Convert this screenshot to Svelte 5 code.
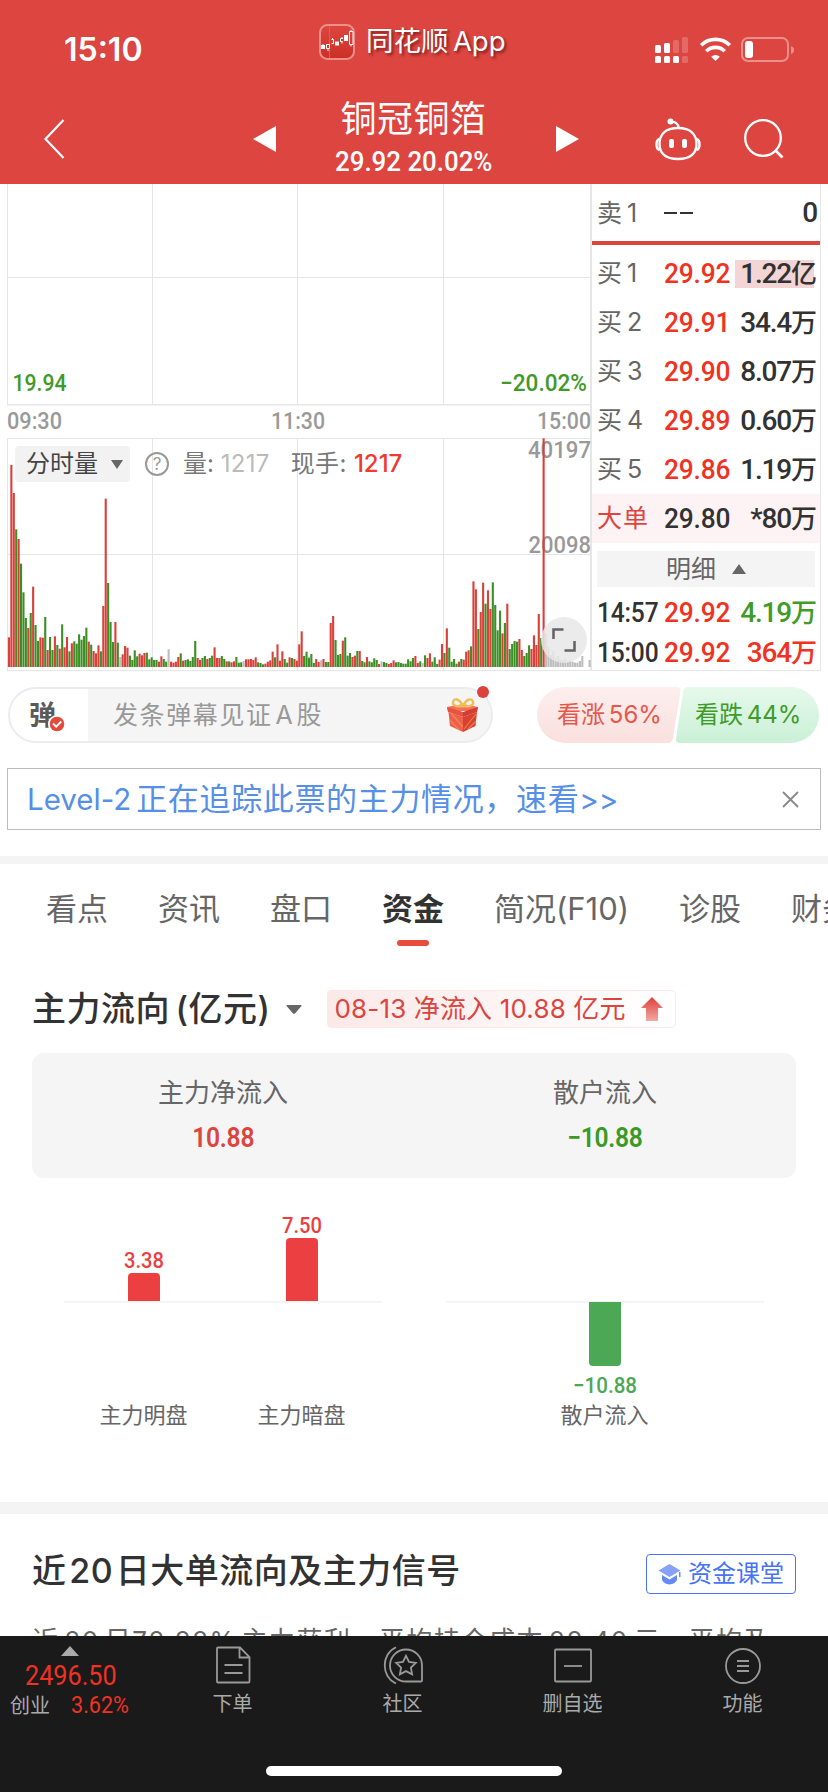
<script lang="ts">
	const PITCH = 2.4193;

	// one entry per minute: direction (r up, g down, n flat) + volume height
	const volumes = (
		'r89 r606 r522 g413 r384 g310 g224 g147 r117 g162 r241 g126 g78 r89 r88 g150 r51 g90 g51 r92 ' +
		'g66 r55 g128 r59 r90 g47 r71 g77 g70 g98 g82 g93 g118 r76 g67 r48 r41 r65 g47 r183 ' +
		'r505 g252 g135 g75 r135 g73 n30 r38 r63 r58 g34 g21 g50 g32 r40 r35 r42 g43 g23 g29 ' +
		'g21 g21 r16 r32 g24 g16 n53 r16 r13 r16 r30 g41 r19 g21 g23 g18 g30 g78 r27 r21 ' +
		'g27 g33 r24 g27 g34 r59 r27 r27 g33 g24 r17 g17 r14 r17 g30 g13 g14 n18 r23 r23 ' +
		'r24 r21 r29 g14 g12 g8 r10 r16 r20 r46 g29 r68 r19 r47 g24 g13 r29 g27 r24 r19 ' +
		'r68 r107 g33 g46 g28 g39 g12 r24 r15 n20 r24 g15 g15 r132 r153 g81 g36 g39 r79 g89 ' +
		'g34 g42 r30 r34 g48 r48 g18 g14 r30 g17 g14 g26 g21 r9 n17 g15 g12 r9 r12 r20 ' +
		'g14 g15 g12 g10 g10 g23 g17 g27 r33 r12 g17 n12 g35 r27 r41 g16 g29 g9 r22 r69 ' +
		'g42 r116 g58 g16 g24 g10 r16 g24 r22 r46 r50 g62 r257 r233 g114 r165 r253 g190 r230 r174 ' +
		'g254 g186 g110 g169 r101 g132 r190 g54 g69 g78 g76 r84 r51 g33 g42 g65 r54 r95 r66 r159 ' +
		'g87 r686 n101 n61 n36 n48 n26 n33 n21 n19 n24 n16 n21 n16 n13 n13 n18 n33 n0 n0 n21'
	)
		.split(' ')
		.map((v, i) => ({
			x: 7.9 + i * PITCH,
			dir: v[0],
			h: Number(v.slice(1)) / 3
		}));

	const bids = [
		{ label: '买', no: 1, price: '29.92', vol: '1.22', unit: '亿', hot: true },
		{ label: '买', no: 2, price: '29.91', vol: '34.4', unit: '万' },
		{ label: '买', no: 3, price: '29.90', vol: '8.07', unit: '万' },
		{ label: '买', no: 4, price: '29.89', vol: '0.60', unit: '万' },
		{ label: '买', no: 5, price: '29.86', vol: '1.19', unit: '万' }
	];

	const trades = [
		{ time: '14:57', price: '29.92', vol: '4.19', dir: 'green' },
		{ time: '15:00', price: '29.92', vol: '364', dir: 'red' }
	];

	const tabs = ['看点', '资讯', '盘口', '资金', '简况(F10)', '诊股', '财务'];
	let active = $state('资金');
</script>

<div class="app">
	<header>
		<div class="status">
			<span class="clock">15:10</span>
			<div class="brand">
				<svg width="36" height="36" viewBox="0 0 36 36">
					<defs>
						<linearGradient id="logo" x1="0" y1="0" x2="0" y2="1">
							<stop offset="0" stop-color="#dd4640" />
							<stop offset="1" stop-color="#cb3026" />
						</linearGradient>
					</defs>
					<rect x="1" y="1" width="34" height="34" rx="7.5" fill="url(#logo)" stroke="#ec8f8b" stroke-width="2" />
					<path d="M10.5 2v32" stroke="#e2655f" stroke-width=".8" />
					<g fill="#fff">
						<path d="M2 21h4v4h-4zM3.500 20h1v1h-1zM16 17.500h4v4h-4zM25 11h4v6h-4z" />
					</g>
					<g fill="none" stroke="#fff" stroke-width="1">
						<path d="M7.500 20.500h3v4h-3zM9 24.500v2.500M12.500 15.500h2v4h-2M13.500 14v1.500M21.500 14.500h2.500M21.500 14.500v3h2M23 13v2M23 17.500v2M30.500 7.500h3.500v13h-3.500zM32 6v1.500M32 20.500v2" />
					</g>
				</svg>
				<span>同花顺<s></s>App</span>
			</div>
			<svg class="signals" width="142" height="28" viewBox="0 0 142 28">
				<g fill="#fff">
					<rect x="0" y="9" width="6" height="8" rx="1.500" />
					<rect x="9" y="7" width="6" height="10" rx="1.500" />
					<rect x="18" y="4" width="6" height="13" rx="1.500" opacity=".2" />
					<rect x="27" y="1" width="6" height="16" rx="1.500" opacity=".2" />
					<rect x="0" y="20" width="6" height="7" rx="1.500" />
					<rect x="9" y="20" width="6" height="7" rx="1.500" />
					<rect x="18" y="20" width="6" height="7" rx="1.500" />
					<rect x="27" y="20" width="6" height="7" rx="1.500" opacity=".2" />
					<path d="M60.500 25l4.300-4.300a6.200 6.200 0 0 0-8.600 0z" />
					<rect x="90" y="5" width="8" height="17" rx="3" />
					<path d="M136 10v8q3-1 3-4t-3-4z" opacity=".4" />
				</g>
				<g fill="none" stroke="#fff" stroke-width="3.600">
					<path d="M46.200 9.300a20.300 20.300 0 0 1 28.600 0" />
					<path d="M51.300 15.200a13 13 0 0 1 18.400 0" />
				</g>
				<rect x="87" y="2" width="46" height="23" rx="6" fill="none" stroke="#fff" stroke-width="2" opacity=".4" />
			</svg>
		</div>

		<div class="nav">
			<svg class="back" width="22" height="40" viewBox="0 0 22 40">
				<path d="M19.500 1L1.500 20l18 19" fill="none" stroke="#fff" stroke-width="2.200" />
			</svg>
			<svg class="prev" width="23" height="26" viewBox="0 0 23 26"><path d="M0 13L23 0v26z" fill="#fff" /></svg>
			<div class="stock">
				<span class="name">铜冠铜箔</span>
				<span class="num quote">29.92 20.02%</span>
			</div>
			<svg class="next" width="23" height="26" viewBox="0 0 23 26"><path d="M23 13L0 0v26z" fill="#fff" /></svg>
			<svg class="robot" width="46" height="43" viewBox="0 0 46 43">
				<g fill="none" stroke="#fff" stroke-width="2.400">
					<path d="M23 10C36 10 41.500 17 41.500 26S36 41 23 41 4.500 35 4.500 26 10 10 23 10z" />
					<path d="M4.500 21C.5 22 .5 31 4.500 32M41.500 21c4 1 4 10 0 11M16 4c4-.5 7.500 1.500 7.500 6" />
				</g>
				<circle cx="15.500" cy="3.500" r="3" fill="#fff" />
				<rect x="14" y="21" width="5" height="9" rx="2" fill="#fff" />
				<rect x="27" y="21" width="5" height="9" rx="2" fill="#fff" />
			</svg>
			<svg class="search" width="40" height="40" viewBox="0 0 40 40">
				<circle cx="19" cy="19" r="17.800" fill="none" stroke="#fff" stroke-width="2.300" />
				<path d="M31.500 31.500l7 7" stroke="#fff" stroke-width="2.600" />
			</svg>
		</div>
	</header>

	<main>
		<section class="market">
			<div class="chart">
				<svg width="592" height="487" viewBox="0 184 592 487">
					<g fill="#e6e6e6">
						<rect x="7" y="184" width="1" height="221" />
						<rect x="152" y="184" width="1" height="221" />
						<rect x="297" y="184" width="1" height="221" />
						<rect x="443" y="184" width="1" height="221" />
						<rect x="7" y="277" width="583" height="1" />
						<rect x="7" y="404" width="583" height="1.500" />
						<rect x="590" y="184" width="2" height="221" />

						<rect x="7" y="438" width="583" height="1" />
						<rect x="7" y="554" width="583" height="1" />
						<rect x="7" y="670" width="585" height="1" />
						<rect x="7" y="438" width="1" height="233" />
						<rect x="152" y="438" width="1" height="233" />
						<rect x="297" y="438" width="1" height="233" />
						<rect x="443" y="438" width="1" height="233" />
						<rect x="590" y="405" width="2" height="266" />
					</g>
					<g class="axis">
						<text x="12.500" y="391" textLength="54" lengthAdjust="spacingAndGlyphs" class="down">19.94</text>
						<text x="500" y="391" textLength="87" lengthAdjust="spacingAndGlyphs" class="down">−20.02%</text>
						<text x="7" y="429" textLength="55" lengthAdjust="spacingAndGlyphs">09:30</text>
						<text x="271" y="429" textLength="54" lengthAdjust="spacingAndGlyphs">11:30</text>
						<text x="537" y="429" textLength="54" lengthAdjust="spacingAndGlyphs">15:00</text>
						<text x="528" y="458" textLength="63" lengthAdjust="spacingAndGlyphs">40197</text>
						<text x="528.500" y="552.500" textLength="62.500" lengthAdjust="spacingAndGlyphs">20098</text>
					</g>
					{#each volumes as v}
						<rect class={v.dir} x={v.x} y={667 - v.h} width="2.1" height={v.h} />
					{/each}
				</svg>

				<div class="legend">
					<button class="kind">
						分时量
						<svg width="12" height="9" viewBox="0 0 12 9"><path d="M0 0h12L6 9z" fill="#666" /></svg>
					</button>
					<span class="help">?</span>
					<span>量: <i>1217</i></span>
					<span class="hand">现手: <b>1217</b></span>
				</div>

				<button class="expand" aria-label="全屏">
					<svg width="24" height="24" viewBox="0 0 24 24">
						<path d="M1.500 11V1.500H11.500M22.500 13v9.500H12.500" fill="none" stroke="#666" stroke-width="2.600" />
					</svg>
				</button>
			</div>

			<aside>
				<div class="row ask">
					<span class="label">卖<s></s>1</span>
					<span class="dash"><em></em><em></em></span>
					<span class="num vol">0</span>
				</div>
				<div class="split"></div>
				{#each bids as b}
					<div class="row">
						<span class="label">{b.label}<s></s>{b.no}</span>
						<span class="num price">{b.price}</span>
						<span class="num vol" class:hot={b.hot}>{b.vol}<small>{b.unit}</small></span>
					</div>
				{/each}
				<div class="row big">
					<span class="label">大单</span>
					<span class="num price">29.80</span>
					<span class="num vol">*80<small>万</small></span>
				</div>
				<div class="detail">
					明细
					<svg width="14" height="10" viewBox="0 0 14 10"><path d="M0 10h14L7 0z" fill="#666" /></svg>
				</div>
				{#each trades as t}
					<div class="row trade">
						<span class="num time">{t.time}</span>
						<span class="num price">{t.price}</span>
						<span class="num vol {t.dir}">{t.vol}<small>万</small></span>
					</div>
				{/each}
			</aside>
		</section>

		<section class="barrage">
			<div class="field">
				<div class="toggle">
					弹
					<svg width="18" height="18" viewBox="0 0 18 18">
						<circle cx="9" cy="9" r="9" fill="#fff" />
						<circle cx="9" cy="9" r="7.300" fill="#e14b3c" />
						<path d="M5 8.500l3.200 3.200L13.200 6.500" fill="none" stroke="#fff" stroke-width="1.900" />
					</svg>
				</div>
				<span class="hint">发条弹幕见证<span class="a">A</span>股</span>
				<svg class="gift" width="34" height="36" viewBox="0 0 34 36">
					<path d="M1 10l16-3 15 3-1 4H2z" fill="#f0705a" />
					<path d="M1 10l16 5v5L2 15z" fill="#e65342" />
					<path d="M32 10l-15 5v5l14-5z" fill="#d23c34" />
					<path d="M2.500 15L17 20v15L4 29z" fill="#ee6048" />
					<path d="M31 15l-14 5v15l12.500-6z" fill="#d9412f" />
					<path d="M5 16l12 14M4 23l9 10M30 17L18 32M30 24l-8 8" stroke="#f59068" stroke-width="1.200" opacity=".7" />
					<g fill="none" stroke="#f2bd57" stroke-width="2.400">
						<path d="M17 9C12 10 6 9 7 5s6-4 10 4z" />
						<path d="M17 9c5 1 11 0 10-4s-6-4-10 4z" />
					</g>
				</svg>
				<span class="dot"></span>
			</div>
			<div class="vote">
				<svg width="283" height="56" viewBox="0 0 283 56">
					<defs>
						<linearGradient id="up" x1="0" y1="0" x2="0" y2="1">
							<stop offset="0" stop-color="#fcefee" />
							<stop offset="1" stop-color="#fae0de" />
						</linearGradient>
						<linearGradient id="dn" x1="0" y1="0" x2="0" y2="1">
							<stop offset="0" stop-color="#e6f9ec" />
							<stop offset="1" stop-color="#caf0d6" />
						</linearGradient>
					</defs>
					<path d="M28 0H140q4 0 3.500 4L136 51q-1 5-5 5H28A28 28 0 0 1 28 0z" fill="url(#up)" />
					<path d="M151 0H254a28 28 0 0 1 0 56H143q-4.500 0-4-4L146 5q1-5 5-5z" fill="url(#dn)" />
				</svg>
				<span class="bull">看涨<s></s>56%</span>
				<span class="bear">看跌<s></s>44%</span>
			</div>
		</section>

		<section class="notice">
			<span><span class="latin">Level-2</span>正在追踪此票的主力情况，速看<span class="latin">&gt;&gt;</span></span>
			<svg width="17" height="17" viewBox="0 0 17 17">
				<path d="M1 1l15 15M16 1L1 16" stroke="#888" stroke-width="1.800" />
			</svg>
		</section>

		<nav class="tabs">
			{#each tabs as tab}
				<button class:active={tab === active} onclick={() => (active = tab)}>{tab}</button>
			{/each}
		</nav>

		<section class="flow">
			<div class="flow-head">
				<h2>主力流向<s></s>(亿元)</h2>
				<svg class="caret" width="16" height="9" viewBox="0 0 16 9">
					<path d="M1 0h14q1 .5 0 1.500L9 8.500q-1 .7-2 0L1 1.500Q0 .5 1 0z" fill="#666" />
				</svg>
				<div class="badge">
					<span>08-13 净流入 10.88 亿元</span>
					<svg width="22" height="24" viewBox="0 0 22 24">
						<defs>
							<linearGradient id="arr" x1="0" y1="0" x2="0" y2="1">
								<stop offset="0" stop-color="#dc4038" />
								<stop offset="1" stop-color="#f2aaa5" />
							</linearGradient>
						</defs>
						<path d="M11 0L22 11h-5v13H5V11H0z" fill="url(#arr)" />
					</svg>
				</div>
			</div>

			<div class="card">
				<div>
					<span>主力净流入</span>
					<strong class="num in">10.88</strong>
				</div>
				<div>
					<span>散户流入</span>
					<strong class="num out">−10.88</strong>
				</div>
			</div>

			<svg class="bars" width="828" height="324" viewBox="0 1178 828 324">
				<rect x="64" y="1301" width="318" height="1.500" fill="#f2f2f2" />
				<rect x="446" y="1301" width="318" height="1.500" fill="#f2f2f2" />
				<path d="M128 1301v-24q0-4 4-4h24q4 0 4 4v24z" fill="#eb3f42" />
				<path d="M286 1301v-59q0-4 4-4h24q4 0 4 4v59z" fill="#eb3f42" />
				<path d="M589 1302v60q0 4 4 4h24q4 0 4-4v-60z" fill="#4ca854" />
				<g class="val">
					<text x="124" y="1267.500" textLength="40" lengthAdjust="spacingAndGlyphs" fill="#eb3f42">3.38</text>
					<text x="282" y="1232.500" textLength="40" lengthAdjust="spacingAndGlyphs" fill="#eb3f42">7.50</text>
					<text x="573" y="1392.500" textLength="64" lengthAdjust="spacingAndGlyphs" fill="#4ca854">−10.88</text>
				</g>
				<g class="cat">
					<text x="143.500" y="1423">主力明盘</text>
					<text x="301.500" y="1423">主力暗盘</text>
					<text x="604.500" y="1423">散户流入</text>
				</g>
			</svg>
		</section>

		<section class="signal">
			<div class="signal-head">
				<h2>近<s></s>20<s></s>日大单流向及主力信号</h2>
				<button class="lesson">
					<svg width="23" height="21" viewBox="0 0 23 21">
						<path d="M11.500 0L22.500 6.500 11.500 13 .5 6.500z" fill="#86a2f8" />
						<path d="M4 11l7.500 4.500L19 11v5q-2 4-7.500 4.500Q6 20 4 16z" fill="#668af7" />
						<path d="M21 8h1.500v5H21z" fill="#668af7" />
					</svg>
					资金课堂
				</button>
			</div>
			<p>近<s></s>20<s></s>日72.22%<s></s>主力获利，平均持仓成本<s></s>28.40<s></s>元，平均及</p>
		</section>
	</main>

	<footer>
		<div class="bar">
			<div class="index">
				<svg width="18" height="10" viewBox="0 0 18 10"><path d="M0 10h18L9 0z" fill="#aaa" /></svg>
				<span class="num point">2496.50</span>
				<div><span class="board">创业</span><span class="num pct">3.62%</span></div>
			</div>
			<div class="item">
				<svg width="36" height="38" viewBox="0 0 36 38">
					<path d="M2 2.500q0-1 1-1H25L34.500 11V35.500q0 1-1 1H3q-1 0-1-1zM24.500 2v9.500H34M9.500 19h18M9.500 27h18" />
				</svg>
				<span>下单</span>
			</div>
			<div class="item">
				<svg width="42" height="38" viewBox="0 0 42 38">
					<path d="M24 3.500a16 16 0 0 0 0 32H39q1 0 1-1V19.500A16 16 0 0 0 24 3.500zM14 1.200C-1 8-1 31 14 37.500" />
					<path d="M24 9.800l3 6.100 6.800 1-4.900 4.700 1.200 6.700-6.100-3.200-6.100 3.200 1.200-6.700-4.900-4.700 6.800-1z" />
				</svg>
				<span>社区</span>
			</div>
			<div class="item">
				<svg width="38" height="38" viewBox="0 0 38 38">
					<rect x="1" y="3.500" width="36" height="32" rx="1" />
					<path d="M10 20h18" />
				</svg>
				<span>删自选</span>
			</div>
			<div class="item">
				<svg width="38" height="38" viewBox="0 0 38 38">
					<circle cx="19" cy="20" r="17" />
					<path d="M13 15h12M13 20h12M13 25h12" />
				</svg>
				<span>功能</span>
			</div>
		</div>
		<div class="home"></div>
	</footer>
</div>

<style>
	:global(body) {
		background: #fff;
	}

	.app {
		display: flex;
		flex-direction: column;
		width: 828px;
		height: 1792px;
		overflow: hidden;
		font-family: Inter, 'Noto Sans CJK SC', sans-serif;
		line-height: 1;
		color: #323232;
		white-space: nowrap;
	}

	.app :global(svg) {
		display: block;
		flex: none;
	}

	button {
		border: 0;
		padding: 0;
		background: none;
		font: inherit;
		color: inherit;
	}

	s {
		display: inline-block;
		width: 0.16em;
	}

	.num {
		font-family: Roboto, 'Noto Sans CJK SC', sans-serif;
		font-weight: 500;
	}

	header {
		flex: none;
		height: 184px;
		background: #dd4540;
		color: #fff;
	}

	.status {
		display: flex;
		height: 92px;
	}

	.clock {
		width: 255px;
		padding: 34px 0 0 64px;
		font-size: 32px;
		font-weight: 600;
	}

	.brand {
		display: flex;
		align-items: center;
		gap: 11px;
		height: 36px;
		width: 336px;
		padding-top: 24px;
		font-size: 27.5px;
		text-shadow: 2px 2px 3px rgba(60, 0, 0, 0.6);
	}

	.signals {
		margin-top: 36px;
	}

	.nav {
		display: flex;
		align-items: flex-start;
		height: 92px;
	}

	.back {
		margin: 27px 0 0 44px;
	}

	.prev {
		margin: 34px 0 0 187px;
	}

	.stock {
		display: flex;
		flex-direction: column;
		align-items: center;
		box-sizing: border-box;
		width: 280px;
		padding-right: 5px;
	}

	.name {
		margin-top: 8px;
		font-size: 36px;
		line-height: 38px;
		letter-spacing: 0.5px;
	}

	.quote {
		margin-top: 10px;
		font-size: 27.5px;
		transform: scaleX(0.94);
	}

	.next {
		margin-top: 34px;
	}

	.robot {
		margin: 26px 0 0 76px;
	}

	.search {
		margin: 27px 0 0 43px;
	}

	main {
		flex: 1;
		min-height: 0;
		overflow: hidden;
	}

	.market {
		display: flex;
		height: 487px;
	}

	.chart {
		position: relative;
		width: 592px;
	}

	.axis {
		font-family: Roboto, sans-serif;
		font-size: 24px;
		font-weight: 500;
		fill: #999;
	}

	.axis .down {
		fill: #3f9a28;
	}

	.r {
		fill: #da4039;
	}

	.g {
		fill: #3b8f24;
	}

	.n {
		fill: #bdbdbd;
	}

	.legend {
		position: absolute;
		left: 15px;
		top: 262px;
		display: flex;
		align-items: center;
		height: 36px;
		font-size: 24px;
		color: #777;
	}

	.kind {
		display: flex;
		align-items: center;
		gap: 13px;
		width: 115px;
		height: 36px;
		box-sizing: border-box;
		padding-left: 11px;
		border-radius: 4px;
		background: #f2f2f2;
		color: #444;
	}

	.help {
		width: 20px;
		height: 20px;
		margin: 0 14px 0 15px;
		border: 2px solid #999;
		border-radius: 50%;
		font-size: 17px;
		line-height: 21px;
		text-align: center;
		color: #999;
	}

	.legend i {
		font-style: normal;
		color: #bbb;
		letter-spacing: 0.3px;
	}

	.hand {
		margin-left: 21px;
		letter-spacing: 0.4px;
	}

	.legend b {
		font-weight: 500;
		color: #f03a2e;
		letter-spacing: 0;
	}

	.expand {
		position: absolute;
		left: 541px;
		top: 433px;
		display: flex;
		align-items: center;
		justify-content: center;
		width: 46px;
		height: 46px;
		border-radius: 50%;
		background: rgba(232, 232, 232, 0.85);
	}

	aside {
		width: 228px;
		border-right: 1px solid #e6e6e6;
		border-bottom: 1px solid #e6e6e6;
		height: 486px;
	}

	.row {
		display: flex;
		align-items: center;
		height: 49px;
		box-sizing: border-box;
		padding: 0 3px 0 5px;
	}

	.ask {
		height: 57px;
		padding-top: 1px;
	}

	.split {
		height: 4px;
		margin-bottom: 4px;
		background: #dc443e;
	}

	.label {
		width: 67px;
		font-size: 25px;
		color: #666;
		letter-spacing: 1px;
	}

	.row .num {
		font-size: 28px;
		letter-spacing: -1.2px;
	}

	.row .price {
		width: 71px;
		color: #f03223;
		letter-spacing: -0.2px;
		transform: scaleX(0.94);
		transform-origin: left;
	}

	.vol {
		flex: 1;
		height: 28px;
		line-height: 28px;
		text-align: right;
	}

	.hot {
		background: linear-gradient(#f4d5d5, #f4d5d5) right 3px top / calc(100% - 3px) 100% no-repeat;
	}

	.vol small {
		font-size: 26px;
		letter-spacing: 0;
	}

	.dash {
		display: flex;
		gap: 3px;
	}

	.dash em {
		width: 13px;
		height: 2.5px;
		background: #323232;
	}

	.big {
		background: #fdf3f4;
	}

	.big .label {
		color: #dc443e;
	}

	.big .price {
		color: #323232;
	}

	.detail {
		display: flex;
		align-items: center;
		justify-content: center;
		gap: 16px;
		height: 36px;
		margin: 8px 5px 6px;
		background: #f4f4f4;
		font-size: 25px;
		color: #666;
	}

	.trade {
		height: 40px;
	}

	.row .time {
		width: 67px;
		font-size: 27px;
		letter-spacing: -0.2px;
		transform: scaleX(0.91);
		transform-origin: left;
	}

	.green {
		color: #3f9c28;
	}

	.red {
		color: #f03223;
	}

	.barrage {
		display: flex;
		height: 56px;
		margin: 16px 8px 25px;
	}

	.field {
		position: relative;
		display: flex;
		align-items: center;
		width: 486px;
		box-sizing: border-box;
		border: 2px solid #ececec;
		border-radius: 28px;
		background: linear-gradient(90deg, #fff 78px, #f5f5f5 78px);
	}

	.toggle {
		position: relative;
		width: 84px;
		padding-left: 19px;
		font-size: 27px;
		font-weight: 700;
		color: #5a5a5a;
	}

	.toggle svg {
		position: absolute;
		left: 38px;
		top: 13px;
	}

	.hint {
		width: 333px;
		font-size: 25px;
		letter-spacing: 1.6px;
		color: #999;
	}

	.hint .a {
		margin: 0 2px 0 3px;
	}

	.dot {
		position: absolute;
		right: 2px;
		top: -3px;
		width: 12px;
		height: 12px;
		border-radius: 50%;
		background: #da423b;
	}

	.vote {
		position: relative;
		width: 283px;
		margin-left: 44px;
	}

	.vote span {
		position: absolute;
		top: 16px;
		font-size: 24px;
	}

	.bull {
		left: 20px;
		color: #e8574b;
	}

	.bear {
		left: 158px;
		color: #3f9c28;
	}

	.notice {
		display: flex;
		align-items: center;
		justify-content: space-between;
		height: 62px;
		box-sizing: border-box;
		margin: 0 7px 26px;
		padding: 0 21px 0 19px;
		border: 1px solid #bcbcbc;
		font-size: 31px;
		letter-spacing: 0.65px;
		color: #558fe8;
	}

	.latin {
		margin-right: 5px;
		font-size: 29.5px;
		letter-spacing: 0;
	}

	.tabs {
		display: flex;
		gap: 50px;
		height: 90px;
		padding-left: 46px;
		border-top: 8px solid #f4f4f4;
	}

	.tabs button {
		position: relative;
		flex: none;
		height: 88px;
		font-size: 31px;
		color: #666;
	}

	.tabs .active {
		font-weight: 600;
		color: #323232;
	}

	.tabs .active::after {
		content: '';
		position: absolute;
		left: 15px;
		bottom: 6px;
		width: 32px;
		height: 6px;
		border-radius: 3px;
		background: #e84c3d;
	}

	.flow-head {
		display: flex;
		align-items: center;
		height: 38px;
		padding: 36px 0 0 32px;
	}

	h2 {
		margin: 0;
		font-size: 34px;
		font-weight: 500;
		letter-spacing: 0.5px;
	}

	.caret {
		margin: 0 25px 0 15px;
	}

	.badge {
		display: flex;
		align-items: center;
		justify-content: space-between;
		width: 349px;
		height: 38px;
		box-sizing: border-box;
		padding: 0 12px 0 7px;
		border: 1px solid #fbe8e7;
		border-radius: 4px;
		background: linear-gradient(90deg, #fbe9e8, #fff);
		font-size: 26px;
		letter-spacing: 0.15px;
		color: #dc443e;
	}

	.card {
		display: grid;
		grid-template-columns: 1fr 1fr;
		height: 125px;
		margin: 25px 32px 0;
		border-radius: 12px;
		background: #f5f5f5;
	}

	.card div {
		display: flex;
		flex-direction: column;
		align-items: center;
		padding-top: 27px;
		font-size: 26px;
		color: #666;
	}

	.card strong {
		margin-top: 18px;
		font-size: 28px;
		font-weight: 600;
		letter-spacing: -0.3px;
		transform: scaleX(0.88);
	}

	.in {
		color: #dc443e;
	}

	.out {
		color: #3a9a26;
	}

	.val {
		font: 500 22.5px Roboto, sans-serif;
	}

	.cat {
		font-size: 22px;
		text-anchor: middle;
		fill: #666;
	}

	.signal {
		border-top: 12px solid #f4f4f4;
		padding: 0 32px;
	}

	.signal-head {
		display: flex;
		align-items: center;
		justify-content: space-between;
		margin-top: 40px;
		height: 40px;
	}

	.signal-head h2 {
		padding-bottom: 6px;
	}

	.signal-head s {
		width: 0.08em;
	}

	.lesson {
		display: flex;
		align-items: center;
		justify-content: center;
		gap: 7px;
		width: 150px;
		height: 40px;
		border: 1.5px solid #4a72f5;
		border-radius: 4px;
		font-size: 24px;
		color: #4a72f5;
	}

	p {
		margin: 34px 0 0;
		font-size: 26px;
		letter-spacing: 1.5px;
		color: #666;
	}

	p s {
		width: 5px;
	}

	footer {
		flex: none;
		height: 156px;
		background: #1a1a1a;
		color: #aaa;
	}

	.bar {
		display: grid;
		grid-template-columns: 147px repeat(4, 170px);
		height: 130px;
	}

	.index {
		padding: 10px 0 0 10px;
		font-size: 20px;
	}

	.index svg {
		margin-left: 51px;
	}

	.point {
		display: block;
		margin: 6px 0 0 15px;
		font-size: 28px;
		font-weight: 400;
		color: #f03223;
		transform: scaleX(0.9);
		transform-origin: left;
	}

	.index div {
		display: flex;
		align-items: center;
		margin-top: 3px;
	}

	.board {
		width: 61px;
		padding-top: 2px;
	}

	.pct {
		font-size: 24px;
		font-weight: 400;
		color: #f03223;
		transform: scaleX(0.9);
		transform-origin: left;
	}

	.item {
		display: flex;
		flex-direction: column;
		align-items: center;
		gap: 10px;
		padding: 10px 0 0 1px;
		font-size: 20px;
	}

	.item svg {
		fill: none;
		stroke: #999;
		stroke-width: 1.8;
	}

	.home {
		width: 296px;
		height: 10px;
		margin: 0 auto;
		border-radius: 5px;
		background: #fff;
	}
</style>
